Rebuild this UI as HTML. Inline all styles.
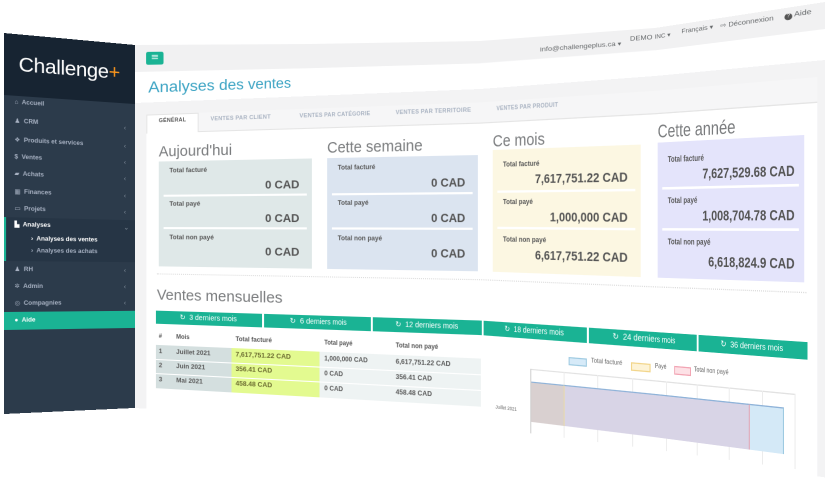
<!DOCTYPE html>
<html><head><meta charset="utf-8"><style>
html,body{margin:0;padding:0}
body{width:825px;height:459px;overflow:hidden;background:#fff;position:relative;font-family:"Liberation Sans",sans-serif}
.p{position:absolute;left:0;top:0;overflow:hidden;transform-origin:0 0}
.d{position:absolute;width:840px;height:400px}
.d div{position:absolute;white-space:nowrap}
.t{top:74px;font:bold 5.5px/6px "Liberation Sans",sans-serif;color:#a9b3c2;letter-spacing:.2px}
.h{font:15px/17px "Liberation Sans",sans-serif;color:#7a7c7e}
.l{left:11px;font:bold 6.5px/8px "Liberation Sans",sans-serif;color:#585858}
.v{right:12px;font:bold 11px/13px "Liberation Sans",sans-serif;color:#555}
.s{left:5px;right:5px;height:1.5px;background:#fff}
.b{top:265px;width:107px;height:13px;background:#1ab394;color:#fff;font:7px/13px "Liberation Sans",sans-serif;text-align:center}
.th{top:288px;font:bold 6px/7px "Liberation Sans",sans-serif;color:#555}
.td{font:bold 6.5px/7px "Liberation Sans",sans-serif;color:#5a5a5a}
.g{top:306px;width:1px;height:56px;background:#ececec}
.m{left:10px;font:bold 6.2px/8px "Liberation Sans","DejaVu Sans",sans-serif;color:#a7b1c2}
.k{left:119px;font:7px/8px "DejaVu Sans",sans-serif;color:#7f8b99}
.n{font:7.5px/8px "Liberation Sans",sans-serif;color:#676a6c}
</style></head><body>

<!-- SIDEBAR -->
<div class="p" style="width:132px;height:381px;transform:matrix3d(1.05124,0.10868,0,0.00037954,0,1,0,0,0,0,1,0,4,33,0,1)"><div class="d" style="left:0;top:0">
<div style="left:0;top:0;width:132px;height:381px;background:#2c3b4b"></div>
<div style="left:0;top:0;width:132px;height:62px;background:#172432"></div>
<div style="left:14px;top:20px;font:20.5px/22px 'Liberation Sans',sans-serif;color:#fff;letter-spacing:-.3px">Challenge<span style="color:#f7941d">+</span></div>
<div style="left:0;top:184px;width:132px;height:44px;background:#263545;border-left:2px solid #1ab394;box-sizing:border-box"></div>
<div style="left:0;top:279px;width:132px;height:18px;background:#1ab394"></div>
<div class="m" style="top:65px">⌂&nbsp; Accueil</div>
<div class="m" style="top:84px">♟&nbsp; CRM</div><div class="k" style="top:84px">‹</div>
<div class="m" style="top:103px">❖&nbsp; Produits et services</div><div class="k" style="top:103px">‹</div>
<div class="m" style="top:120px">$&nbsp; Ventes</div><div class="k" style="top:120px">‹</div>
<div class="m" style="top:137px">▰&nbsp; Achats</div><div class="k" style="top:137px">‹</div>
<div class="m" style="top:155px">▦&nbsp; Finances</div><div class="k" style="top:155px">‹</div>
<div class="m" style="top:172px">▭&nbsp; Projets</div><div class="k" style="top:172px">‹</div>
<div class="m" style="top:188px;color:#fff">▙&nbsp; Analyses</div><div class="k" style="top:188px">⌄</div>
<div class="m" style="left:26px;top:202px;color:#fff">›&nbsp; Analyses des ventes</div>
<div class="m" style="left:26px;top:214px">›&nbsp; Analyses des achats</div>
<div class="m" style="top:233px">♟&nbsp; RH</div><div class="k" style="top:233px">‹</div>
<div class="m" style="top:250px">✲&nbsp; Admin</div><div class="k" style="top:250px">‹</div>
<div class="m" style="top:267px">◎&nbsp; Compagnies</div><div class="k" style="top:267px">‹</div>
<div class="m" style="top:284px;color:#fff">●&nbsp; Aide</div>
</div></div>

<!-- TOP ROW -->
<div class="p" style="width:176px;height:59px;transform:matrix3d(1.204394,0.023297,0,0.00065934,0,1,0,0,0,0,1,0,135,45,0,1)"><div class="d" style="left:-135px;top:0">
<div style="left:135px;top:0;width:700px;height:27px;background:#f1f1f2"></div>
<div style="left:135px;top:27px;width:700px;height:31px;background:#fff"></div>
<div style="left:145px;top:7px;width:16px;height:13px;background:#1ab394;border-radius:2px;color:#fff;font:9px/13px 'DejaVu Sans',sans-serif;text-align:center">≡</div>
<div style="left:147px;top:35px;font:15.5px/17px 'Liberation Sans',sans-serif;color:#3ba3c3">Analyses des ventes</div>
</div></div>
<div class="p" style="width:171px;height:59px;transform:matrix3d(1.235294,0.002451,0,0.0004902,0,0.896552,0,0,0,0,1,0,310,44,0,1)"><div class="d" style="left:-310px;top:0">
<div style="left:135px;top:0;width:700px;height:27px;background:#f1f1f2"></div>
<div style="left:135px;top:27px;width:700px;height:31px;background:#fff"></div>
<div style="left:147px;top:35px;font:15.5px/17px 'Liberation Sans',sans-serif;color:#3ba3c3">Analyses des ventes</div>
</div></div>
<div class="p" style="width:176px;height:59px;transform:matrix3d(1,-0.074286,0,0,0,0.827586,0,0,0,0,1,0,480,41,0,1)"><div class="d" style="left:-480px;top:0">
<div style="left:135px;top:0;width:700px;height:27px;background:#f1f1f2"></div>
<div style="left:135px;top:27px;width:700px;height:31px;background:#fff"></div>
<div class="n" style="left:540px;top:12px">info@challengeplus.ca ▾</div>
<div class="n" style="left:630px;top:7px">DEMO INC ▾</div>
</div></div>
<div class="p" style="width:175px;height:59px;transform:matrix3d(0.163288,-0.15497,0,-0.0010142,0,0.827586,0,0,0,0,1,0,655,28,0,1)"><div class="d" style="left:-655px;top:0">
<div style="left:135px;top:0;width:700px;height:27px;background:#f1f1f2"></div>
<div style="left:135px;top:27px;width:700px;height:31px;background:#fff"></div>
<div class="n" style="left:630px;top:7px">DEMO INC ▾</div>
<div class="n" style="left:686px;top:5px">Français ▾</div>
<div class="n" style="left:728px;top:5px">⇨ Déconnexion</div>
<div class="n" style="left:790px;top:4px"><span style="display:inline-block;width:7px;height:7px;border-radius:50%;background:#555;color:#fff;font-size:5.5px;line-height:7px;text-align:center">?</span> Aide</div>
</div></div>

<!-- BODY ROW -->
<div class="p" style="width:176px;height:305px;transform:matrix3d(0.900977,-0.070666,0,-0.00031943,0,1,0,0,0,0,1,0,135,103,0,1)"><div class="d" style="left:-135px;top:-58px">
<div style="left:135px;top:58px;width:700px;height:340px;background:#f3f3f4"></div>
<div style="left:147px;top:70px;width:671px;height:330px;background:#fff"></div>
<div style="left:147px;top:70px;width:671px;height:18px;background:#f6f6f7;border-bottom:1px solid #e5e5e5"></div>
<div style="left:147px;top:70px;width:54px;height:19px;background:#fff;border:1px solid #e5e5e5;border-bottom:0;box-sizing:border-box"></div>
<div class="t" style="left:160px;color:#555">GÉNÉRAL</div>
<div class="t" style="left:213px">VENTES PAR CLIENT</div>
<div class="t" style="left:300px">VENTES PAR CATÉGORIE</div>
<div class="t" style="left:398px">VENTES PAR TERRITOIRE</div>
<div class="t" style="left:498px">VENTES PAR PRODUIT</div>
<div class="h" style="left:160px;top:99px">Aujourd'hui</div>
<div class="h" style="left:328px;top:99px">Cette semaine</div>
<div class="h" style="left:494px;top:97px">Ce mois</div>
<div class="h" style="left:658px;top:95px">Cette année</div>
<div style="left:160px;top:117px;width:152px;height:104px;background:#dfe8e8"><div class="l" style="top:6px">Total facturé</div><div class="v" style="top:19px">0 CAD</div><div class="s" style="top:33px"></div><div class="l" style="top:39px">Total payé</div><div class="v" style="top:51px">0 CAD</div><div class="s" style="top:65px"></div><div class="l" style="top:72px">Total non payé</div><div class="v" style="top:83px">0 CAD</div></div>
<div style="left:328px;top:117px;width:150px;height:104px;background:#dbe4f0"><div class="l" style="top:6px">Total facturé</div><div class="v" style="top:19px">0 CAD</div><div class="s" style="top:33px"></div><div class="l" style="top:39px">Total payé</div><div class="v" style="top:51px">0 CAD</div><div class="s" style="top:65px"></div><div class="l" style="top:72px">Total non payé</div><div class="v" style="top:83px">0 CAD</div></div>
<div style="left:494px;top:113px;width:148px;height:108px;background:#fcf7e2"><div class="l" style="top:10px">Total facturé</div><div class="v" style="top:21px">7,617,751.22 CAD</div><div class="s" style="top:36px"></div><div class="l" style="top:43px">Total payé</div><div class="v" style="top:54px">1,000,000 CAD</div><div class="s" style="top:68px"></div><div class="l" style="top:76px">Total non payé</div><div class="v" style="top:87px">6,617,751.22 CAD</div></div>
<div style="left:658px;top:112px;width:148px;height:109px;background:#e4e4fb"><div class="l" style="top:11px">Total facturé</div><div class="v" style="top:21px;right:9px">7,627,529.68 CAD</div><div class="s" style="top:36px"></div><div class="l" style="top:44px">Total payé</div><div class="v" style="top:54px;right:9px">1,008,704.78 CAD</div><div class="s" style="top:69px"></div><div class="l" style="top:77px">Total non payé</div><div class="v" style="top:90px;right:9px">6,618,824.9 CAD</div></div>
<div style="left:158px;top:228px;width:650px;border-top:1px dotted #dcdcdc"></div>
<div class="h" style="left:158px;top:241px">Ventes mensuelles</div>
<div class="b" style="left:157px">↻&nbsp; 3 derniers mois</div>
<div class="b" style="left:266px">↻&nbsp; 6 derniers mois</div>
<div class="b" style="left:375px">↻&nbsp; 12 derniers mois</div>
<div class="b" style="left:484px">↻&nbsp; 18 derniers mois</div>
<div class="b" style="left:593px">↻&nbsp; 24 derniers mois</div>
<div class="b" style="left:702px">↻&nbsp; 36 derniers mois</div>
<div class="th" style="left:160px">#</div><div class="th" style="left:178px">Mois</div><div class="th" style="left:238px">Total facturé</div><div class="th" style="left:325px">Total payé</div><div class="th" style="left:398px">Total non payé</div>
<div style="left:157px;top:299px;width:77px;height:43px;background:#d4dfdf"></div>
<div style="left:234px;top:299px;width:86px;height:43px;background:#e3fa90"></div>
<div style="left:320px;top:299px;width:161px;height:43px;background:#eef3f3"></div>
<div style="left:157px;top:313px;width:324px;height:1px;background:#fff"></div>
<div style="left:157px;top:327px;width:324px;height:1px;background:#fff"></div>
<div class="td" style="left:160px;top:302px">1</div><div class="td" style="left:178px;top:302px">Juillet 2021</div><div class="td" style="left:238px;top:302px;color:#6b6b30">7,617,751.22 CAD</div><div class="td" style="left:325px;top:302px">1,000,000 CAD</div><div class="td" style="left:398px;top:302px">6,617,751.22 CAD</div>
<div class="td" style="left:160px;top:316px">2</div><div class="td" style="left:178px;top:316px">Juin 2021</div><div class="td" style="left:238px;top:316px;color:#6b6b30">356.41 CAD</div><div class="td" style="left:325px;top:316px">0 CAD</div><div class="td" style="left:398px;top:316px">356.41 CAD</div>
<div class="td" style="left:160px;top:330px">3</div><div class="td" style="left:178px;top:330px">Mai 2021</div><div class="td" style="left:238px;top:330px;color:#6b6b30">458.48 CAD</div><div class="td" style="left:325px;top:330px">0 CAD</div><div class="td" style="left:398px;top:330px">458.48 CAD</div>
</div></div>
<div class="p" style="width:171px;height:305px;transform:matrix3d(0.850518,-0.068893,0,-0.00031142,0,1.059211,0,0,0,0,1,0,310,96,0,1)"><div class="d" style="left:-310px;top:-58px">
<div style="left:135px;top:58px;width:700px;height:340px;background:#f3f3f4"></div>
<div style="left:147px;top:70px;width:671px;height:330px;background:#fff"></div>
<div style="left:147px;top:70px;width:671px;height:18px;background:#f6f6f7;border-bottom:1px solid #e5e5e5"></div>
<div class="t" style="left:300px">VENTES PAR CATÉGORIE</div>
<div class="t" style="left:398px">VENTES PAR TERRITOIRE</div>
<div class="h" style="left:328px;top:99px">Cette semaine</div>
<div style="left:160px;top:117px;width:152px;height:104px;background:#dfe8e8"><div class="l" style="top:6px">Total facturé</div><div class="v" style="top:19px">0 CAD</div><div class="s" style="top:33px"></div><div class="l" style="top:39px">Total payé</div><div class="v" style="top:51px">0 CAD</div><div class="s" style="top:65px"></div><div class="l" style="top:72px">Total non payé</div><div class="v" style="top:83px">0 CAD</div></div>
<div style="left:328px;top:117px;width:150px;height:104px;background:#dbe4f0"><div class="l" style="top:6px">Total facturé</div><div class="v" style="top:19px">0 CAD</div><div class="s" style="top:33px"></div><div class="l" style="top:39px">Total payé</div><div class="v" style="top:51px">0 CAD</div><div class="s" style="top:65px"></div><div class="l" style="top:72px">Total non payé</div><div class="v" style="top:83px">0 CAD</div></div>
<div style="left:158px;top:228px;width:650px;border-top:1px dotted #dcdcdc"></div>
<div class="b" style="left:266px">↻&nbsp; 6 derniers mois</div>
<div class="b" style="left:375px">↻&nbsp; 12 derniers mois</div>
<div class="th" style="left:325px">Total payé</div><div class="th" style="left:398px">Total non payé</div>
<div style="left:234px;top:299px;width:86px;height:43px;background:#e3fa90"></div>
<div style="left:320px;top:299px;width:161px;height:43px;background:#eef3f3"></div>
<div style="left:157px;top:313px;width:324px;height:1px;background:#fff"></div>
<div style="left:157px;top:327px;width:324px;height:1px;background:#fff"></div>
<div class="td" style="left:238px;top:302px;color:#6b6b30">7,617,751.22 CAD</div><div class="td" style="left:325px;top:302px">1,000,000 CAD</div><div class="td" style="left:398px;top:302px">6,617,751.22 CAD</div>
<div class="td" style="left:325px;top:316px">0 CAD</div><div class="td" style="left:398px;top:316px">356.41 CAD</div>
<div class="td" style="left:325px;top:330px">0 CAD</div><div class="td" style="left:398px;top:330px">458.48 CAD</div>
</div></div>
<div class="p" style="width:176px;height:305px;transform:matrix3d(0.64164,-0.115866,0,-0.00054711,0,1.118421,0,0,0,0,1,0,480,89,0,1)"><div class="d" style="left:-480px;top:-58px">
<div style="left:135px;top:58px;width:700px;height:340px;background:#f3f3f4"></div>
<div style="left:147px;top:70px;width:671px;height:330px;background:#fff"></div>
<div style="left:147px;top:70px;width:671px;height:18px;background:#f6f6f7;border-bottom:1px solid #e5e5e5"></div>
<div class="t" style="left:398px">VENTES PAR TERRITOIRE</div>
<div class="t" style="left:498px">VENTES PAR PRODUIT</div>
<div class="h" style="left:494px;top:97px">Ce mois</div>
<div style="left:328px;top:117px;width:150px;height:104px;background:#dbe4f0"><div class="v" style="top:19px">0 CAD</div><div class="s" style="top:33px"></div><div class="v" style="top:51px">0 CAD</div><div class="s" style="top:65px"></div><div class="v" style="top:83px">0 CAD</div></div>
<div style="left:494px;top:113px;width:148px;height:108px;background:#fcf7e2"><div class="l" style="top:10px">Total facturé</div><div class="v" style="top:21px">7,617,751.22 CAD</div><div class="s" style="top:36px"></div><div class="l" style="top:43px">Total payé</div><div class="v" style="top:54px">1,000,000 CAD</div><div class="s" style="top:68px"></div><div class="l" style="top:76px">Total non payé</div><div class="v" style="top:87px">6,617,751.22 CAD</div></div>
<div style="left:158px;top:228px;width:650px;border-top:1px dotted #dcdcdc"></div>
<div class="b" style="left:375px">↻&nbsp; 12 derniers mois</div>
<div class="b" style="left:484px">↻&nbsp; 18 derniers mois</div>
<div class="b" style="left:593px">↻&nbsp; 24 derniers mois</div>
<div class="th" style="left:398px">Total non payé</div>
<div style="left:320px;top:299px;width:161px;height:43px;background:#eef3f3"></div>
<div style="left:157px;top:313px;width:324px;height:1px;background:#fff"></div>
<div style="left:157px;top:327px;width:324px;height:1px;background:#fff"></div>
<div class="td" style="left:398px;top:302px">6,617,751.22 CAD</div><div class="td" style="left:398px;top:316px">356.41 CAD</div><div class="td" style="left:398px;top:330px">458.48 CAD</div>
<div style="left:573px;top:291px;width:16px;height:5px;background:#d6eaf8;border:1px solid #9ecae1"></div><div style="left:595px;top:290px;font:5.5px/7px 'Liberation Sans',sans-serif;color:#666">Total facturé</div>
<div style="left:633px;top:291px;width:16px;height:5px;background:#fdf3d6;border:1px solid #f2d58a"></div><div style="left:655px;top:290px;font:5.5px/7px 'Liberation Sans',sans-serif;color:#666">Payé</div>
<div style="left:534px;top:304px;width:263px;height:1px;background:#e2e2e2"></div>
<div class="g" style="left:534px;top:304px;background:#ccc"></div><div class="g" style="left:568px;top:304px"></div><div class="g" style="left:601px;top:304px"></div><div class="g" style="left:634px;top:304px"></div><div class="g" style="left:667px;top:304px"></div>
<div style="left:535px;top:315px;width:33px;height:34px;background:#d9d0d0;border-top:1px solid #8fb3d9"></div>
<div style="left:568px;top:315px;width:185px;height:34px;background:#d8d4e6;border-top:1px solid #8fb3d9;border-left:1px solid #e8d9a8"></div>
<div style="left:497px;top:338px;font:4.5px/5px 'Liberation Sans',sans-serif;color:#666">Juillet 2021</div>
</div></div>
<div class="p" style="width:175px;height:305px;transform:matrix3d(0.533371,-0.128053,0,-0.00056561,0,1.236842,0,0,0,0,1,0,655,76,0,1)"><div class="d" style="left:-655px;top:-58px">
<div style="left:135px;top:58px;width:700px;height:340px;background:#f3f3f4"></div>
<div style="left:147px;top:70px;width:671px;height:330px;background:#fff"></div>
<div style="left:147px;top:70px;width:671px;height:18px;background:#f6f6f7;border-bottom:1px solid #e5e5e5"></div>
<div class="h" style="left:658px;top:95px">Cette année</div>
<div style="left:494px;top:113px;width:148px;height:108px;background:#fcf7e2"></div>
<div style="left:658px;top:112px;width:148px;height:109px;background:#e4e4fb"><div class="l" style="top:11px">Total facturé</div><div class="v" style="top:21px;right:9px">7,627,529.68 CAD</div><div class="s" style="top:36px"></div><div class="l" style="top:44px">Total payé</div><div class="v" style="top:54px;right:9px">1,008,704.78 CAD</div><div class="s" style="top:69px"></div><div class="l" style="top:77px">Total non payé</div><div class="v" style="top:90px;right:9px">6,618,824.9 CAD</div></div>
<div style="left:158px;top:228px;width:650px;border-top:1px dotted #dcdcdc"></div>
<div class="b" style="left:593px">↻&nbsp; 24 derniers mois</div>
<div class="b" style="left:702px">↻&nbsp; 36 derniers mois</div>
<div style="left:633px;top:291px;width:16px;height:5px;background:#fdf3d6;border:1px solid #f2d58a"></div><div style="left:655px;top:290px;font:5.5px/7px 'Liberation Sans',sans-serif;color:#666">Payé</div>
<div style="left:676px;top:291px;width:16px;height:5px;background:#fde1e6;border:1px solid #f2a5b4"></div><div style="left:697px;top:290px;font:5.5px/7px 'Liberation Sans',sans-serif;color:#666">Total non payé</div>
<div style="left:534px;top:304px;width:263px;height:1px;background:#e2e2e2"></div>
<div class="g" style="left:667px;top:304px"></div><div class="g" style="left:700px;top:304px"></div><div class="g" style="left:733px;top:304px"></div><div class="g" style="left:766px;top:304px"></div><div class="g" style="left:797px;top:304px"></div>
<div style="left:568px;top:315px;width:185px;height:34px;background:#d8d4e6;border-top:1px solid #8fb3d9"></div>
<div style="left:753px;top:315px;width:32px;height:34px;background:#d4e9f7;border-top:1px solid #8fb3d9;border-left:1px solid #e3a3b3;border-right:1px solid #9ecae1"></div>
</div></div>

</body></html>
